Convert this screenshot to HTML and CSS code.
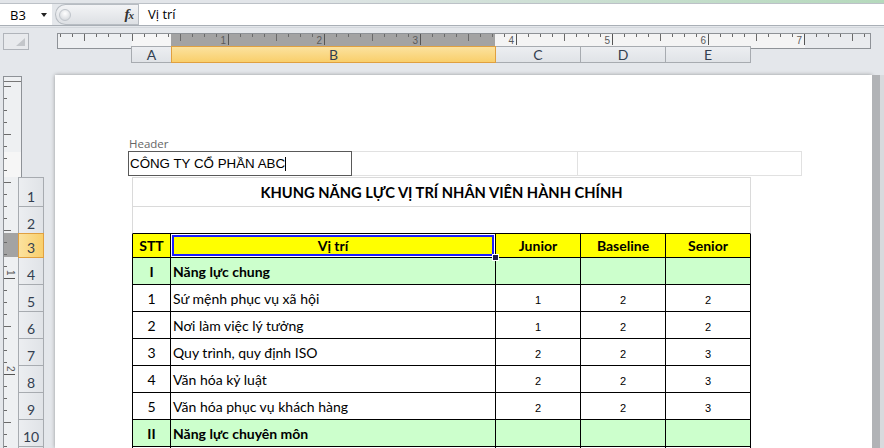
FILE: index.html
```html
<!DOCTYPE html>
<html lang="vi">
<head>
<meta charset="utf-8">
<title>Excel - Page Layout</title>
<link rel="stylesheet" href="styles.css">
</head>
<body>
<div class="topstrip"></div>
<div class="fbar">
  <div class="namebox"><span>B3</span><span class="dd"></span></div>
  <div class="grip"><span class="knob"></span><span class="fx">f<span class="x">x</span></span></div>
  <div class="finput">Vị trí</div>
</div>
<div class="fbar-sep"></div>

<div class="rulerrow">
  <div class="selall"><span class="tri"></span></div>
  <div class="hruler-wrap">
    <div class="hruler">
      <div class="inches">
        <span class="inch">1</span><span class="inch">2</span><span class="inch">3</span><span class="inch">4</span><span class="inch">5</span><span class="inch">6</span><span class="inch">7</span>
      </div>
    </div>
    <div class="colheads">
      <div class="ch a">A</div>
      <div class="ch b sel">B</div>
      <div class="ch">C</div>
      <div class="ch">D</div>
      <div class="ch">E</div>
    </div>
  </div>
</div>

<div class="main">
  <div class="gutter">
    <div class="vruler">
      <div class="vinches">
        <span class="vinch"><span class="vn">1</span></span>
        <span class="vinch"><span class="vn">2</span></span>
      </div>
    </div>
    <div class="rowheads">
      <div class="rh h1">1</div>
      <div class="rh">2</div>
      <div class="rh h3 sel">3</div>
      <div class="rh">4</div>
      <div class="rh">5</div>
      <div class="rh">6</div>
      <div class="rh">7</div>
      <div class="rh">8</div>
      <div class="rh">9</div>
      <div class="rh">10</div>
      <div class="rh">11</div>
    </div>
  </div>

  <div class="page">
    <div class="hlabel">Header</div>
    <div class="hbox">
      <div class="hsec edit">CÔNG TY CỔ PHẦN ABC<span class="caret"></span></div>
      <div class="hsec mid"></div>
      <div class="hsec right"></div>
    </div>

    <div class="sheet">
      <div class="title">KHUNG NĂNG LỰC VỊ TRÍ NHÂN VIÊN HÀNH CHÍNH</div>
      <div class="blank"></div>

      <div class="row hdr">
        <div class="c first">STT</div>
        <div class="c sel">Vị trí<span class="handle"></span></div>
        <div class="c">Junior</div>
        <div class="c">Baseline</div>
        <div class="c">Senior</div>
      </div>

      <div class="row grp">
        <div class="c first">I</div>
        <div class="c txt">Năng lực chung</div>
        <div class="c"></div>
        <div class="c"></div>
        <div class="c"></div>
      </div>

      <div class="row">
        <div class="c first">1</div>
        <div class="c txt">Sứ mệnh phục vụ xã hội</div>
        <div class="c val">1</div>
        <div class="c val">2</div>
        <div class="c val">2</div>
      </div>
      <div class="row">
        <div class="c first">2</div>
        <div class="c txt">Nơi làm việc lý tưởng</div>
        <div class="c val">1</div>
        <div class="c val">2</div>
        <div class="c val">2</div>
      </div>
      <div class="row">
        <div class="c first">3</div>
        <div class="c txt">Quy trình, quy định ISO</div>
        <div class="c val">2</div>
        <div class="c val">2</div>
        <div class="c val">3</div>
      </div>
      <div class="row">
        <div class="c first">4</div>
        <div class="c txt">Văn hóa kỷ luật</div>
        <div class="c val">2</div>
        <div class="c val">2</div>
        <div class="c val">3</div>
      </div>
      <div class="row">
        <div class="c first">5</div>
        <div class="c txt">Văn hóa phục vụ khách hàng</div>
        <div class="c val">2</div>
        <div class="c val">2</div>
        <div class="c val">3</div>
      </div>

      <div class="row grp">
        <div class="c first">II</div>
        <div class="c txt">Năng lực chuyên môn</div>
        <div class="c"></div>
        <div class="c"></div>
        <div class="c"></div>
      </div>

      <div class="row">
        <div class="c first"></div>
        <div class="c txt"></div>
        <div class="c"></div>
        <div class="c"></div>
        <div class="c"></div>
      </div>
    </div>
  </div>
  <div class="nextpage"></div>
</div>
</body>
</html>
```

FILE: styles.css
```css
* { box-sizing: border-box; }
html, body { margin: 0; padding: 0; }
body {
  width: 884px;
  height: 448px;
  overflow: hidden;
  background: #e4e7eb;
  font-family: "Lato", "Noto Sans", sans-serif;
  color: #000;
}

/* ---------- formula bar ---------- */
.topstrip {
  height: 4px;
  background: linear-gradient(to right, #e2e5e9 0, #e2e5e9 30%, #b5d9bc 100%);
  border-bottom: 1px solid #bcc1c7;
}
.fbar { display: flex; height: 21px; }
.namebox {
  width: 52px;
  background: #fff;
  display: flex;
  align-items: center;
  justify-content: space-between;
  padding: 0 5px 0 10px;
  font: 13px "Open Sans", sans-serif;
}
.dd {
  width: 0; height: 0;
  border-left: 3.5px solid transparent;
  border-right: 3.5px solid transparent;
  border-top: 4px solid #222;
}
.grip {
  margin-left: 3px;
  width: 83px;
  display: flex;
  align-items: center;
  justify-content: space-between;
  background: linear-gradient(#f3f4f6, #dde0e4);
  border: 1px solid #b7bcc2;
  border-right: 0;
  border-radius: 11px 0 0 11px;
  padding: 0 5px 0 3px;
}
.knob {
  width: 12px; height: 12px;
  border-radius: 50%;
  background: radial-gradient(circle at 50% 35%, #ffffff, #cdd1d6);
  border: 1px solid #c0c5cb;
}
.fx { font: italic bold 15px "Liberation Serif", serif; color: #333; letter-spacing: -1px; }
.fx .x { font-size: 11px; }
.finput {
  flex: 1;
  background: #fff;
  border-left: 1px solid #b7bcc2;
  padding-left: 9px;
  font: 13px "Open Sans", sans-serif;
  line-height: 21px;
}
.fbar-sep { height: 3px; border-top: 1px solid #a9afb6; border-bottom: 1px solid #d3d7dc; }

/* ---------- horizontal ruler + column headers ---------- */
.rulerrow { display: flex; margin-top: 5px; }
.selall {
  width: 26px; height: 17px;
  margin-left: 3px;
  border: 1px solid #b0b4ba;
  background: #e8eaed;
  display: flex;
  align-items: flex-end;
  justify-content: flex-end;
  padding: 0 3px 3px 0;
}
.tri {
  width: 9px; height: 8px;
  background: #c3c6ca;
  clip-path: polygon(100% 0, 100% 100%, 0 100%);
}
.hruler-wrap { margin-left: 28px; }
.hruler {
  width: 814px;
  height: 16px;
  border: 1px solid #8e9297;
  background:
    repeating-linear-gradient(to right, #6a6a6a 0 1px, transparent 1px 48px) 26px 0 / 100% 7px no-repeat,
    repeating-linear-gradient(to right, #6a6a6a 0 1px, transparent 1px 12px) 2px 0 / 100% 3px no-repeat,
    linear-gradient(to right, #eef0f2 0 74px, #f6f6f6 74px 113px, #a3a3a3 113px 437px, #f4f4f4 437px 747px, #e9ebee 747px);
}
.inches { display: flex; padding-left: 75px; }
.inch {
  width: 96px;
  height: 11px;
  border-right: 1px solid #555;
  text-align: right;
  padding-right: 2px;
  padding-top: 1px;
  font: 10px/11px "Liberation Sans", sans-serif;
  color: #5a5a5a;
}
.colheads { display: flex; margin-top: -3px; margin-left: 74px; }
.ch {
  width: 85px;
  height: 17px;
  border: 1px solid #a7abb0;
  border-left: 0;
  background: linear-gradient(#eceef1, #e0e3e7);
  display: flex;
  align-items: center;
  justify-content: center;
  font-size: 14px;
  color: #333f50;
}
.ch.a { width: 41px; border-left: 1px solid #a7abb0; }
.ch.sel {
  width: 325px;
  margin-left: -1px;
  border: 1px solid #e0a040;
  background: linear-gradient(#fbe29f, #f9cf6b);
}

/* ---------- main ---------- */
.main { display: flex; height: 385px; }
.gutter { width: 55px; display: flex; flex-shrink: 0; }
.vruler {
  margin-left: 3px;
  margin-top: 13px;
  width: 19px;
  flex-shrink: 0;
  border: 1px solid #8e9297;
  border-bottom: 0;
  background:
    linear-gradient(#777, #777) 0 4px / 100% 1px no-repeat,
    repeating-linear-gradient(to bottom, #6a6a6a 0 1px, transparent 1px 48px) 0 9px / 7px 100% no-repeat,
    repeating-linear-gradient(to bottom, #6a6a6a 0 1px, transparent 1px 12px) 0 9px / 3px 100% no-repeat,
    linear-gradient(to bottom, #eef0f2 0 75px, #f6f6f6 75px 100px, #eef0f2 100px 156px, #a3a3a3 156px 180px, #eef0f2 180px);
}
.vinches { display: flex; flex-direction: column; padding-top: 106px; }
.vinch {
  width: 11px;
  height: 96px;
  border-bottom: 1px solid #555;
  display: flex;
  align-items: flex-end;
  justify-content: center;
  padding-bottom: 2px;
}
.vn {
  writing-mode: vertical-rl;
  font: 10px/10px "Liberation Sans", sans-serif;
  color: #5a5a5a;
}
.rowheads {
  margin-left: -4px;
  margin-top: 114px;
  width: 26px;
  flex-shrink: 0;
  display: flex;
  flex-direction: column;
}
.rh {
  height: 27px;
  flex-shrink: 0;
  border: 1px solid #a7abb0;
  border-top: 0;
  background: linear-gradient(to right, #eceef1, #e0e3e7);
  display: flex;
  align-items: flex-end;
  justify-content: center;
  padding-bottom: 2px;
  font-size: 14px;
  line-height: 14px;
  color: #333f50;
}
.rh.h1 { height: 30px; border-top: 1px solid #a7abb0; }
.rh.h3 { height: 24px; }
.rh.sel {
  height: 25px;
  margin-top: -1px;
  border: 1px solid #e0a040;
  background: linear-gradient(to right, #fbe29f, #f9cf6b);
}

.page {
  width: 817px;
  flex-shrink: 0;
  margin-top: 12px;
  background: #fff;
  box-shadow: 0 0 4px rgba(0, 0, 0, 0.35);
  padding: 63px 0 0 73px;
}
.nextpage {
  width: 12px;
  margin-top: 12px;
  background: linear-gradient(to right, #b1b3b6 0 8px, #d8dadd 8px);
}

/* ---------- header area ---------- */
.hlabel {
  height: 13px;
  padding-left: 1px;
  font: 11.5px/12px "Open Sans", sans-serif;
  color: #666;
}
.hbox { display: flex; }
.hsec {
  height: 25px;
  border: 1px solid #e1e1e1;
  border-left: 0;
}
.hsec.edit {
  width: 224px;
  border: 1px solid #595959;
  padding: 2px 0 0 1px;
  font: 13.33px/19px "Liberation Sans", sans-serif;
  white-space: nowrap;
}
.hsec.mid { width: 226px; }
.hsec.right { width: 224px; }
.caret {
  display: inline-block;
  width: 1px;
  height: 14px;
  background: #000;
  vertical-align: -3px;
}

/* ---------- worksheet ---------- */
.sheet {
  margin: 1px 0 0 4px;
  display: grid;
  grid-template-columns: 39px 325px 85px 85px 85px;
  grid-template-rows: 30px 27px 24px repeat(8, 27px);
}
.title {
  grid-column: 1 / -1;
  border: 1px solid #dadada;
  display: flex;
  align-items: center;
  justify-content: center;
  font-weight: 700;
  font-size: 14.7px;
}
.blank {
  grid-column: 1 / -1;
  border-left: 1px solid #dadada;
  border-right: 1px solid #dadada;
  border-bottom: 1px solid #000;
}
.row { display: contents; }
.c {
  border-right: 1px solid #000;
  border-bottom: 1px solid #000;
  display: flex;
  align-items: center;
  justify-content: center;
  font-size: 14px;
  background: #fff;
}
.c.first { border-left: 1px solid #000; }
.c.txt { justify-content: flex-start; padding-left: 2px; }
.c.val { font: 11px "Liberation Sans", sans-serif; padding-top: 3px; }
.hdr .c { background: #ffff00; font-weight: 700; }
.grp .c { background: #ccffcc; font-weight: 700; }
.c.sel {
  position: relative;
  box-shadow: inset 0 0 0 1px #fff, inset 0 0 0 3px #1a1aff;
}
.handle {
  position: absolute;
  right: -4px;
  bottom: -4px;
  width: 7px;
  height: 7px;
  background: #1b1b4a;
  border: 1px solid #fff;
}
```
